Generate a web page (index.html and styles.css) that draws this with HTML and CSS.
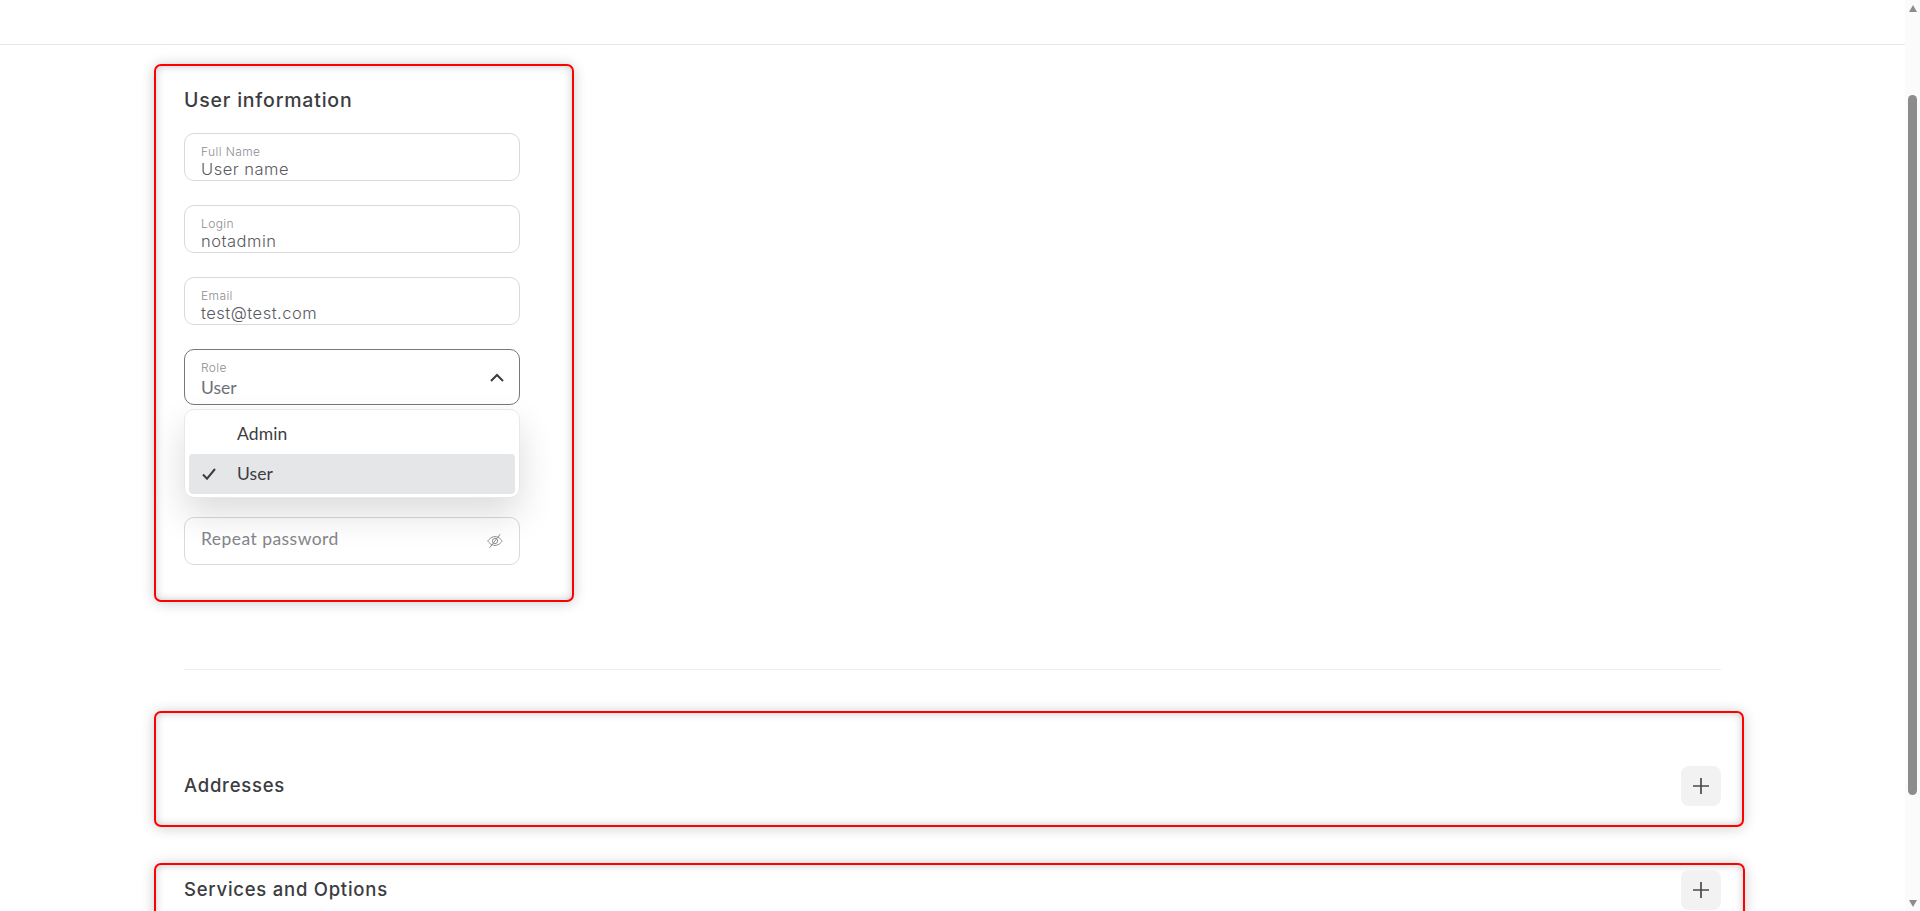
FILE: index.html
```html
<!DOCTYPE html>
<html lang="en">
<head>
<meta charset="utf-8">
<title>User information</title>
<link rel="stylesheet" href="styles.css">
</head>
<body>
<div class="shell">
  <main class="page">
    <header class="topbar"></header>
    <div class="content">
      <section class="card user-card">
        <h2 class="card-title user-title">User information</h2>
        <div class="fields">
          <div class="field"><span class="field-label">Full Name</span><span class="field-value">User name</span></div>
          <div class="field"><span class="field-label">Login</span><span class="field-value">notadmin</span></div>
          <div class="field"><span class="field-label">Email</span><span class="field-value">test@test.com</span></div>
          <div class="select-wrap">
            <div class="field select">
              <div class="select-text"><span class="field-label">Role</span><span class="select-value">User</span></div>
              <svg class="chevron" width="14" height="9" viewBox="0 0 14 9"><path d="M1 8l6-6 6 6" fill="none" stroke="#3c3c41" stroke-width="2"/></svg>
            </div>
            <div class="menu">
              <div class="menu-item"><span class="menu-check"></span><span>Admin</span></div>
              <div class="menu-item selected">
                <span class="menu-check"><svg width="14" height="12" viewBox="0 0 14 12"><path d="M1 6.5l4 4.2L13 1" fill="none" stroke="#3c3c41" stroke-width="2"/></svg></span>
                <span>User</span>
              </div>
            </div>
          </div>
          <div class="field password"><span class="placeholder">Password</span></div>
          <div class="field repeat">
            <span class="placeholder">Repeat password</span>
            <svg class="eye" width="16" height="16" viewBox="0 0 16 16" fill="none" stroke="#8f8f94" stroke-width="1"><path d="M.8 8S3.4 3.6 8 3.6 15.2 8 15.2 8 12.6 12.4 8 12.4.8 8 .8 8z"/><circle cx="8" cy="8" r="2.6"/><path d="M13.2 1.2L2.6 14.8"/></svg>
          </div>
        </div>
      </section>
      <hr class="divider">
      <section class="card wide addresses">
        <h2 class="card-title">Addresses</h2>
        <button class="plus" type="button" aria-label="Add"><svg width="16" height="16" viewBox="0 0 16 16"><path d="M8 0v16M0 8h16" stroke="#4b4b4f" stroke-width="1.7"/></svg></button>
      </section>
      <section class="card wide services">
        <h2 class="card-title">Services and Options</h2>
        <button class="plus" type="button" aria-label="Add"><svg width="16" height="16" viewBox="0 0 16 16"><path d="M8 0v16M0 8h16" stroke="#4b4b4f" stroke-width="1.7"/></svg></button>
      </section>
    </div>
  </main>
  <aside class="scrollbar">
    <span class="arrow up"></span>
    <span class="thumb"></span>
    <span class="arrow down"></span>
  </aside>
</div>
</body>
</html>
```

FILE: styles.css
```css
* { box-sizing: border-box; }
html, body { margin: 0; height: 100%; overflow: hidden; background: #fff; }
body { font-family: "Inter", "Liberation Sans", sans-serif; color: #3c3c41; }

.shell { display: flex; height: 911px; }
.page { flex: 1; min-width: 0; overflow: hidden; }
.topbar { height: 45px; border-bottom: 1px solid #e9e9e9; }
.content { padding: 19px 0 0 154px; }

.card {
  border: 2px solid #ff0000;
  border-radius: 7px;
  background: #fff;
  box-shadow: 0 1px 14px rgba(0,0,0,.2), inset 0 0 8px rgba(0,0,0,.22);
}
.user-card { width: 420px; height: 538px; padding: 0 28px; }
.card-title { margin: 0; font-size: 18.5px; line-height: 24px; font-weight: 500; letter-spacing: .75px; color: #3c3c41; }
.user-title { padding-top: 22px; height: 67px; font-size: 19.5px; letter-spacing: .8px; }

.fields { display: flex; flex-direction: column; gap: 24px; width: 336px; }
.field {
  height: 48px;
  border: 1px solid #d9d9db;
  border-radius: 10px;
  padding: 11px 15px 0 16px;
  display: flex;
  flex-direction: column;
}
.field-label { font-size: 12px; line-height: 14px; letter-spacing: .4px; color: #8d8d92; font-weight: 300; }
.field-value { font-size: 16.5px; line-height: 20px; letter-spacing: .5px; color: #5a5a5f; font-weight: 300; }

.select-wrap { position: relative; }
.field.select {
  height: 56px;
  border-color: #77777a;
  flex-direction: row;
  align-items: flex-start;
  justify-content: space-between;
  padding: 11px 15px 0 16px;
}
.select-text { display: flex; flex-direction: column; }
.select-value { padding-top: 1px; font-family: "Lato", sans-serif; font-size: 17.5px; line-height: 23px; color: #6d7178; }
.chevron { margin-top: 12px; }

.menu {
  position: absolute;
  top: 60px;
  left: 0;
  width: 336px;
  height: 89px;
  padding: 4px;
  border: 1px solid #e8e8ea;
  border-radius: 10px;
  background: #fff;
  box-shadow: 0 16px 36px rgba(0,0,0,.14);
  font-family: "Lato", sans-serif;
  font-size: 17.5px;
  letter-spacing: .1px;
  color: #3c3c41;
}
.menu-item { height: 40px; padding-bottom: 2px; display: flex; align-items: center; border-radius: 4px; }
.menu-item.selected { background: #e5e6e8; }
.menu-check { width: 48px; padding: 2px 0 0 13px; display: flex; }

.placeholder { font-family: "Lato", sans-serif; font-size: 17.5px; line-height: 22px; letter-spacing: .45px; color: #85858a; }
.password { margin-bottom: 16px; }
.repeat { flex-direction: row; justify-content: space-between; padding-top: 10px; }
.eye { margin-top: 5px; margin-right: 1px; }

.divider { height: 1px; width: 1537px; margin: 67px 0 0 30px; border: 0; background: #ececec; }

.wide { display: flex; justify-content: space-between; align-items: flex-start; width: 1590px; padding: 0 21px 19px 28px; }
.addresses { margin-top: 41px; height: 116px; padding-top: 53px; }
.services { margin-top: 36px; width: 1591px; padding-top: 5px; padding-right: 22px; }
.wide .card-title { line-height: 38px; }

.plus {
  width: 40px;
  height: 40px;
  padding: 0;
  border: 0;
  border-radius: 8px;
  background: #f2f2f2;
  display: flex;
  align-items: center;
  justify-content: center;
}

.scrollbar {
  width: 15px;
  flex: none;
  background: #fbfbfb;
  padding: 5px 3px 4px;
  display: flex;
  flex-direction: column;
  align-items: center;
}
.arrow { width: 0; height: 0; border-left: 4.5px solid transparent; border-right: 4.5px solid transparent; }
.arrow.up { border-bottom: 7px solid #8c8c8c; }
.arrow.down { border-top: 7px solid #8c8c8c; margin-top: auto; }
.thumb { width: 9px; height: 700px; margin-top: 83px; background: #8c8c8c; border-radius: 5px; }
```
